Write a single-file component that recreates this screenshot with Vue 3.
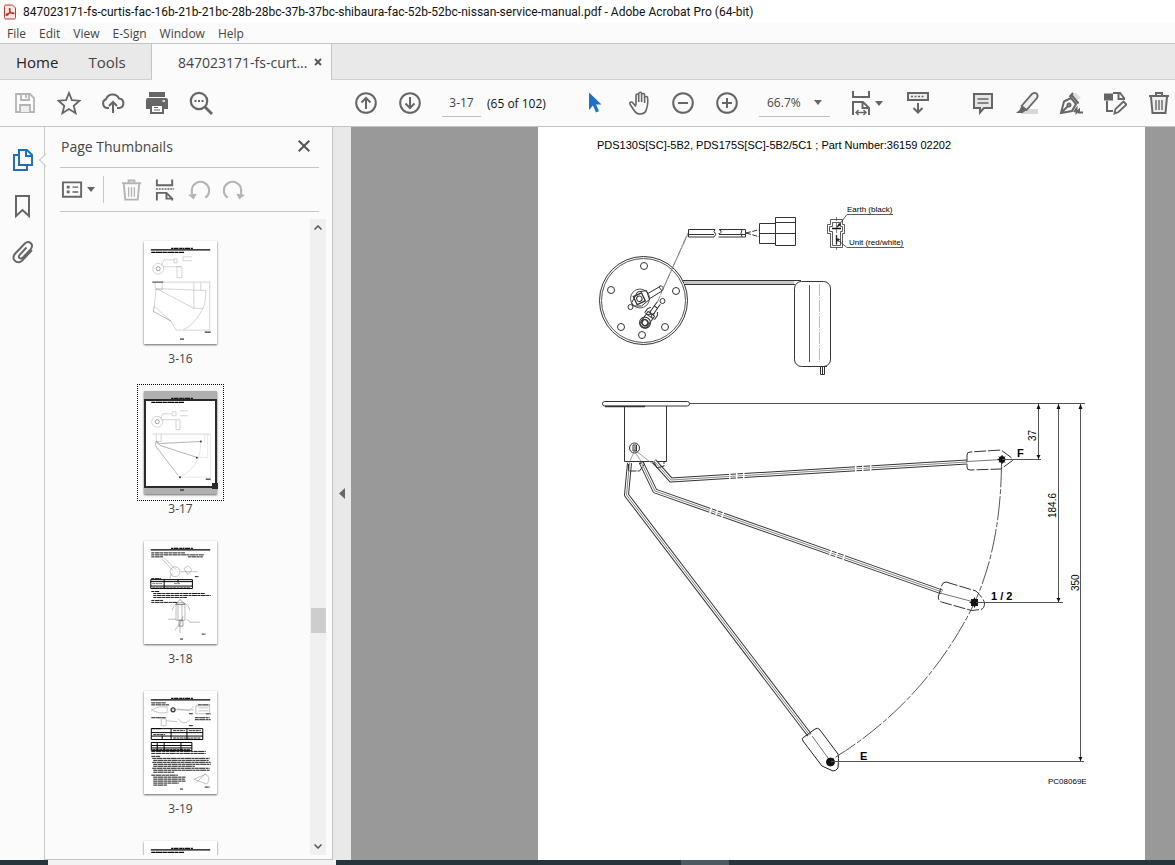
<script setup>
import { ref } from 'vue'

const pageNumber = ref('3-17')
const zoomLevel = ref('66.7%')
const menus = ['File', 'Edit', 'View', 'E-Sign', 'Window', 'Help']
const thumbs = [
  { id: '3-16', caption: '3-16' },
  { id: '3-17', caption: '3-17' },
  { id: '3-18', caption: '3-18' },
  { id: '3-19', caption: '3-19' },
  { id: 'next', caption: '' }
]
const current = ref('3-17')

const bolts = [[644, 266], [611, 290], [676, 291], [621, 327], [665, 327], [642, 335]]
</script>

<template>
  <div class="window">
    <header class="titlebar">
      <svg class="app-icon" viewBox="0 0 12 16" aria-hidden="true">
        <path d="M2 1h6.500l3 3v9.500q0 1.500-1.500 1.500H2Q.5 15 .5 13.500v-11Q.5 1 2 1z" fill="#fbe9e7" stroke="#c9382e" />
        <path d="M2.500 11.500c1.500 0 4-4 3.600-6.300-.2-1-1-.7-.8.300.4 2.200 2.800 4.500 4.200 4.300 1-.2.400-1.100-.8-1.100-2 0-6.200 1-6.600 2-.2.500 0 .8.400.8z" fill="none" stroke="#c81e14" stroke-width="1.100" />
      </svg>
      <h1>847023171-fs-curtis-fac-16b-21b-21bc-28b-28bc-37b-37bc-shibaura-fac-52b-52bc-nissan-service-manual.pdf - Adobe Acrobat Pro (64-bit)</h1>
    </header>

    <nav class="menubar" aria-label="Menu">
      <button v-for="m in menus" :key="m" type="button">{{ m }}</button>
    </nav>

    <div class="tabs">
      <div class="fixed-tabs">
        <button type="button" class="home">Home</button>
        <button type="button">Tools</button>
      </div>
      <div class="doc-tab">
        <button type="button">847023171-fs-curt...</button>
        <button type="button" class="close-tab" aria-label="Close tab">
          <svg viewBox="0 0 8 8" aria-hidden="true"><path d="M1 1l6 6M7 1L1 7" stroke="#555" stroke-width="1.800" /></svg>
        </button>
      </div>
    </div>

    <div class="toolbar">
      <div class="group files">
        <button type="button" class="tool" aria-label="Save">
          <svg viewBox="0 0 24 24" stroke="#b4b4b4" stroke-width="1.800"><path d="M3 3h14l4 4v14H3zM8 3v6h8V3" /><path d="M7 21v-7h10v7" fill="#eee" /><path d="M13 4v3" /></svg>
        </button>
        <button type="button" class="tool" aria-label="Star">
          <svg viewBox="0 0 24 24" stroke="#666" stroke-width="1.800"><path d="M12 2l2.900 7.200 7.700.5-5.900 5 1.900 7.500-6.600-4.100-6.600 4.100 1.900-7.500-5.900-5 7.700-.5z" /></svg>
        </button>
        <button type="button" class="tool" aria-label="Upload">
          <svg viewBox="0 0 24 24" stroke="#666" stroke-width="2"><path d="M8 17H6.500A4.500 4.500 0 0 1 5 8.300a7 7 0 0 1 13-.8 4.800 4.800 0 0 1 .5 9.500H16M12 22V11M8 15l4-4 4 4" /></svg>
        </button>
        <button type="button" class="tool" aria-label="Print">
          <svg viewBox="0 0 24 24"><path d="M4 1h16v5H4zM3 7h18q2 0 2 2v9h-4v-4H5v4H1V9q0-2 2-2z" fill="#666" /><path d="M6 14h12v8H6z" fill="#fff" stroke="#666" stroke-width="2" /><path d="M9 16.500h4M9 19h6" stroke="#666" stroke-width="1.200" /><path d="M17.500 10h2.500" stroke="#fff" stroke-width="1.500" /></svg>
        </button>
        <button type="button" class="tool" aria-label="Search">
          <svg viewBox="0 0 24 24" stroke="#666" stroke-width="2.200"><circle cx="10" cy="10" r="8.200" /><path d="M16 16l7 7" stroke-width="2.800" /><path d="M5.500 10h2M9 10h2M12.500 10h2" stroke-width="1.800" /></svg>
        </button>
      </div>

      <div class="group">
        <button type="button" class="tool" aria-label="Previous page">
          <svg viewBox="0 0 24 24" stroke="#666" stroke-width="2"><circle cx="12" cy="12" r="9.800" /><path d="M12 18V7M7.500 11.500L12 7l4.500 4.500" /></svg>
        </button>
        <button type="button" class="tool" aria-label="Next page">
          <svg viewBox="0 0 24 24" stroke="#666" stroke-width="2"><circle cx="12" cy="12" r="9.800" /><path d="M12 6v11M7.500 12.500L12 17l4.500-4.500" /></svg>
        </button>
        <input v-model="pageNumber" class="page-input" aria-label="Page number">
        <span class="page-count">(65 of 102)</span>
      </div>

      <span class="divider" />

      <div class="group view">
        <button type="button" class="tool" aria-label="Select">
          <svg viewBox="0 0 24 24"><path d="M6 1.500l12.500 12h-5.500l3 6.500-3 1.500-3-7L6 19z" fill="#1e6fc8" /></svg>
        </button>
        <button type="button" class="tool" aria-label="Hand">
          <svg viewBox="0 0 24 24" stroke="#666" stroke-width="1.600"><path d="M8 14V4.500q0-1.500 1.300-1.500t1.400 1.500V11V3q0-1.700 1.500-1.700T13.600 3v8V4q0-1.500 1.500-1.500T16.600 4v8V7q0-1.500 1.500-1.500T19.600 7q.3 2 .1 5t-1.200 6q-1 5-6.500 5-3.500 0-5.500-3L2.200 13.500q-1-1.600.3-2.300t2.500.8l3 3.500" transform="translate(1 0)" /></svg>
        </button>
        <button type="button" class="tool" aria-label="Zoom out">
          <svg viewBox="0 0 24 24" stroke="#666" stroke-width="2"><circle cx="12" cy="12" r="9.800" /><path d="M7 12h10" /></svg>
        </button>
        <button type="button" class="tool" aria-label="Zoom in">
          <svg viewBox="0 0 24 24" stroke="#666" stroke-width="2"><circle cx="12" cy="12" r="9.800" /><path d="M7 12h10M12 7v10" /></svg>
        </button>
        <div class="zoom-box">
          <select v-model="zoomLevel" aria-label="Zoom level">
            <option>66.7%</option>
            <option>100%</option>
          </select>
          <svg class="caret" viewBox="0 0 8 5" aria-hidden="true"><path d="M0 0h8L4 5z" /></svg>
        </div>
        <button type="button" class="tool fit" aria-label="Fit width">
          <svg viewBox="0 0 24 28" stroke="#666" stroke-width="2"><path d="M4 2v6h16V2M4 26V13h10l6 6v7M13.500 13v6H20" /><path d="M7 23.500h10M9.500 21L7 23.500 9.500 26M14.500 21l2.500 2.500-2.500 2.500" stroke-width="1.400" /></svg>
          <svg class="caret" viewBox="0 0 8 5" aria-hidden="true"><path d="M0 0h8L4 5z" /></svg>
        </button>
        <button type="button" class="tool" aria-label="Read mode">
          <svg viewBox="0 0 24 24" stroke="#666" stroke-width="2"><path d="M2 2h20v7H2z" fill="#eee" /><path d="M5 5.500h14" stroke-dasharray="2 1.500" stroke-width="1.600" /><path d="M12 12v9M7.500 17l4.500 4.500 4.500-4.500" /></svg>
        </button>
      </div>

      <span class="divider" />

      <div class="group comment">
        <button type="button" class="tool" aria-label="Comment">
          <svg viewBox="0 0 24 24" stroke="#666" stroke-width="2"><path d="M3 3h18v14h-8l-4 4.500V17H3z" fill="#e6e6e6" /><path d="M6.500 8h11M6.500 12h11" stroke-width="1.400" /></svg>
        </button>
        <button type="button" class="tool" aria-label="Highlight">
          <svg viewBox="0 0 24 24" stroke="#666" stroke-width="1.800"><path d="M6 18h17v5H6z" fill="#d8d8d8" stroke="none" /><path d="M6.500 15L17 3q2.500-2 4.500-.5t.5 4.500L11.500 19z" fill="#eee" /><path d="M6.500 15l5 4-4 3H1l3.500-3z" fill="#666" stroke="none" /></svg>
        </button>
        <button type="button" class="tool" aria-label="Sign">
          <svg viewBox="0 0 24 24" stroke="#666" stroke-width="2"><path d="M13 3l5 6 4-2-5-5z" fill="#ddd" stroke="none" /><path d="M2 22L5 10.500 12 7l5 6-4 7zM2 22l7-7M10.500 6L14 2M12.500 4l7 8.500" /><circle cx="10" cy="14" r="1.500" /><path d="M15 21l2.500-3.500v4l2.500-2.500v2.500h4" /></svg>
        </button>
        <button type="button" class="tool" aria-label="Edit document">
          <svg viewBox="0 0 24 24" stroke="#666" stroke-width="2"><path d="M10 2h7l4 5v2M15.500 2v6H21M4 10v10h6" /><path d="M2 3.500h7v5H2z" fill="#666" /><path d="M11.500 22.500l1-4.500 8-7.500 3 3-8 7.500z" stroke-width="1.800" /></svg>
        </button>
        <button type="button" class="tool" aria-label="Delete">
          <svg viewBox="0 0 24 24" stroke="#666" stroke-width="2"><path d="M4 6l1.500 16h13L20 6" fill="#eee" /><path d="M2 5h20M9 4.500V2h6v2.500" /><path d="M9 9v10M12 9v10M15 9v10" stroke-width="1.400" /></svg>
        </button>
      </div>
    </div>

    <main class="workspace">
      <nav class="rail" aria-label="Navigation panes">
        <button type="button" class="active" aria-label="Page thumbnails">
          <svg viewBox="0 0 24 24" stroke="#1e6fc0" stroke-width="2"><path d="M8 2h8l5 5v10H8zM15 2v6h6" /><path d="M8 7H3v15h13v-5" /></svg>
        </button>
        <button type="button" aria-label="Bookmarks">
          <svg viewBox="0 0 24 24" stroke="#666" stroke-width="2"><path d="M5 2h13v20l-6.500-6L5 22z" /></svg>
        </button>
        <button type="button" aria-label="Attachments">
          <svg viewBox="0 0 24 24" stroke="#666" stroke-width="1.900"><path d="M15.500 7.500l-7 7.500q-1.500 2 0 3t3-.2l8-8.500q3-3.500.3-6t-6 .2l-9.500 10q-3.500 4-.5 7.200t7.200 0l10-10.500" /></svg>
        </button>
      </nav>

      <aside class="panel">
        <div class="panel-head">
          <h2>Page Thumbnails</h2>
          <button type="button" aria-label="Close panel">
            <svg viewBox="0 0 12 12" stroke="#555" stroke-width="2"><path d="M.7.700l10.600 10.600M11.300.700L.700 11.300" /></svg>
          </button>
        </div>
        <div class="panel-tools">
          <button type="button" class="options" aria-label="Options">
            <svg viewBox="0 0 24 24" stroke="#666" stroke-width="2"><path d="M2 4h19v15H2z" /><path d="M6 9h3M6 14h3" stroke-width="3" /><path d="M12 9h6M12 14h6" stroke-width="1.500" /></svg>
            <svg class="caret" viewBox="0 0 8 5" aria-hidden="true"><path d="M0 0h8L4 5z" /></svg>
          </button>
          <span class="tool-divider" />
          <button type="button" aria-label="Delete pages">
            <svg viewBox="0 0 24 24" stroke="#b4b4b4" stroke-width="2"><path d="M4 6l1.500 16h13L20 6" /><path d="M2 5h20M9 4.500V2h6v2.500" /><path d="M9 9v10M12 9v10M15 9v10" stroke-width="1.400" /></svg>
          </button>
          <button type="button" aria-label="Split pages">
            <svg viewBox="0 0 24 24" stroke="#666" stroke-width="2"><path d="M3 1v6h16V1M3 23v-8h10l6 6v2M13 15v6h6" /><path d="M2 11h19" stroke-dasharray="2 1" stroke-width="1.600" /></svg>
          </button>
          <button type="button" aria-label="Rotate left">
            <svg viewBox="0 0 24 24" stroke="#b4b4b4" stroke-width="2.200"><path d="M4 17V12a9 9 0 1 1 14 8" /><path d="M0 17l9-1-3 6z" fill="#b4b4b4" stroke="none" /></svg>
          </button>
          <button type="button" aria-label="Rotate right">
            <svg viewBox="0 0 24 24" stroke="#b4b4b4" stroke-width="2.200"><path d="M20 17V12a9 9 0 1 0-14 8" /><path d="M24 17l-9-1 3 6z" fill="#b4b4b4" stroke="none" /></svg>
          </button>
        </div>

        <div class="list-row">
          <div class="thumb-list">
            <button
              v-for="t in thumbs" :key="t.id" type="button" class="thumb"
              :class="{ selected: t.id === current }" @click="current = t.id"
            >
              <span class="frame">
                <svg viewBox="0 0 73 104" fill="none" stroke="#aaa" stroke-width=".5" aria-hidden="true">
                  <path d="M27 7.500h22" stroke="#111" stroke-width="1.300" stroke-dasharray="2 .5 5 .7 3 .4" />
                  <path v-if="t.id !== '3-17'" d="M6.500 9h60" stroke="#000" stroke-width="1.100" />
                  <path v-if="t.id !== '3-18' && t.id !== '3-19'" d="M7 11.500h33" stroke="#000" stroke-width="1.100" stroke-dasharray="4 .4 7 .4" />

                  <template v-if="t.id === '3-16'">
                    <circle cx="14" cy="28" r="5.500" /><circle cx="14" cy="28" r="2" stroke="#444" />
                    <path d="M17 25l3-6h10M30 18h3v4h-3zM39 16h9M39 20h9M39 16v4M19 26h18M33 26h5v11h-5z" />
                    <path d="M9 41.500h58M11 41v8h7v-8" /><path d="M8 41.500h11" stroke="#444" stroke-width="1" />
                    <path d="M12 48l50 2M62 50v3q0 11-4 17-7 14-19 20h27V42M12 48l38 20h9M50 42v26M57 42v8M12 48l-2 18 17 15 5 9h6" />
                    <path d="M10 66l-1 5 18 10" stroke="#666" />
                    <path d="M61 92h6M36 99h4" stroke="#000" stroke-width="1" />
                  </template>

                  <template v-if="t.id === '3-17'">
                    <circle cx="13" cy="31" r="5.500" /><circle cx="13" cy="31" r="2" stroke="#444" />
                    <path d="M16 28l3-5h8M28 21h4v4h-4zM36 20h8M36 25h8M17 29h15M32 29h4v10h-4z" />
                    <path d="M8 43.500h59M12 44v7h5v-7" />
                    <path d="M12 51l3 2 42-2M12 51l4 4 37 12M12 51l-1 4 23 30" stroke="#666" />
                    <path d="M57 51q0 20-11 29-5 5-11 7h32V44M61 44v7M64 44v23H53" stroke="#ccc" />
                    <path d="M62 89h5M36 100h4" stroke="#000" stroke-width="1" />
                    <g fill="#333" stroke="none"><circle cx="57" cy="51" r="1" /><circle cx="53" cy="67.500" r="1" /><circle cx="36" cy="87" r="1" /></g>
                  </template>

                  <template v-if="t.id === '3-18'">
                    <g stroke="#000" stroke-width=".9" stroke-dasharray="3 .5 5 .4">
                      <path d="M7 12h34M7 14h53M7 16h12M44 16h15M7 38h10M7 51h8M9 53h52M9 55h58M9 57h34M7 60h12M7 62h26M51 36h4M58 94h4M36 99h3" />
                    </g>
                    <path d="M18 18l11 12M20 17l12 12M26 31a5 5 0 1 1 10 0a5 5 0 1 1-10 0zM40 28l4-3 4 4-4 5zM37 31h17M29 33q-3 0-3 5" stroke="#888" />
                    <path d="M6.500 39h42v9h-42zM6.500 41h42M6.500 45.500h42M20 39v9M34 39v3" stroke="#000" stroke-width="1" />
                    <path d="M8 43h10M30 43h6M8 47h38" stroke="#000" stroke-dasharray="3 .5" />
                    <path d="M32 64h9v16h-9zM34 64v16M38 64v16M28 70q2-8 9-8t9 8M36 80v13M31 90l6-8 2-6M24 79h8M43 79l3 3h10" stroke="#777" />
                    <path d="M32 64l4-5 5 5zM35 80h4v6h-4z" stroke="#444" />
                  </template>

                  <template v-if="t.id === '3-19'">
                    <g stroke="#000" stroke-width=".9" stroke-dasharray="4 .4 6 .5 3 .4">
                      <path d="M7 12h15M7 14h18M54 14h12M7 27h15M51 27h15M51 29h16M7 38h10M45 23h4M62 23h5M45 35h4" />
                      <path d="M7 61h55M7 63h55M7 66h9M8 68h58M9 70h56M8 72h59M9 74h58M9 76h42M8 78h58M9 80h57M9 82h21M7 85h27M9 87h33M9 89h32M9 91h33M9 93h26M9 95h14M61 97h5M36 99h3" />
                    </g>
                    <path d="M7 19l5-2 3-1h8v6h-8l-3-1zM26 19h24M33 18l12 2 5-5M52 15h14v8H52zM55 17h10M55 20h10M17 28h5v7h-5zM22 30l11 1M34 28q6 8 12 1M50 89l12-5q6 4 1 10zM52 93l10-10" stroke="#888" />
                    <circle cx="29" cy="19" r="2" stroke="#333" stroke-width="1.200" />
                    <path d="M7 38h52v11H7zM7 42h52M7 45.500h52M27 38v11M43 38v11M18 45v4M7 52h41v8H7zM7 55h41M7 57.500h41M13 52v8M20 52v8M37 52v8" stroke="#000" stroke-width="1" />
                    <path d="M29 40h12M45 40h12M9 44h12M29 47.500h28M8 59h38" stroke="#000" stroke-width=".8" stroke-dasharray="3 .5" />
                  </template>
                </svg>
                <span v-if="t.id === current" class="viewport" />
              </span>
              <span v-if="t.caption" class="caption">{{ t.caption }}</span>
            </button>
          </div>
          <div class="scrollbar">
            <svg viewBox="0 0 8 5" aria-hidden="true"><path d="M.5 4.500L4 1l3.500 3.500" /></svg>
            <span class="scroll-thumb" />
            <svg viewBox="0 0 8 5" aria-hidden="true"><path d="M.5.500L4 4 7.500.500" /></svg>
          </div>
        </div>
      </aside>

      <button type="button" class="splitter" aria-label="Collapse panel">
        <svg viewBox="0 0 6 11" aria-hidden="true"><path d="M6 0v11L0 5.500z" fill="#666" /></svg>
      </button>

      <section class="canvas" aria-label="Document">
        <article class="page">
          <p>PDS130S[SC]-5B2, PDS175S[SC]-5B2/5C1 ; Part Number:36159 02202</p>
          <svg class="drawing" viewBox="538 165 607 675" fill="none" stroke="#333" stroke-width="1">
            <!-- flange, top view -->
            <circle cx="643.500" cy="300.500" r="44" /><circle cx="643.500" cy="300.500" r="42" stroke="#555" />
            <circle v-for="b in bolts" :key="b[0]" :cx="b[0]" :cy="b[1]" r="3.500" />
            <circle cx="640" cy="298.500" r="9.500" stroke="#555" />
            <path d="M631.500 303l6-11 9-1.500 3 9-8 6.500h-8z" />
            <g transform="rotate(-25 640 299)"><path d="M635 294h9v9h-9z" stroke-width="1.300" /><circle cx="639.500" cy="298.500" r="2.700" /></g>
            <path d="M647 294l12-7 3 4-13 8M659 286.500q3-2 4 1t-2 3.500" />
            <circle cx="662.500" cy="301" r="2.500" /><circle cx="630.500" cy="307" r="2.500" />
            <g transform="rotate(35 649 317)">
              <path d="M645 313h8v14q-4 4-8 0zM647 305h4v8h-4zM645 308l-2 3v5M653 308l2 3v5M644 316h10" />
              <circle cx="649" cy="324" r="5.500" /><circle cx="649" cy="324" r="3" stroke-width="1.500" /><path d="M647 300v5M651 300v5M646 316l6-5M646 311l6 5" />
            </g>
            <path d="M657 303l29-66 3-6M661 293l28-61" stroke="#777" stroke-width=".8" stroke-dasharray="8 1 3 1" />

            <!-- lead and connector -->
            <path d="M715 229.500h-26.500v7.500h25.500M689 234.500h25M715 229.500q-2 2 0 3.500t-1 4M719 229.500h26.500v7.500h-27M719 234.500h26M742 230q-2 3 0 7M745.500 230v7M719 229.500q3 1 2 3t-2.500 1" />
            <path d="M746 233l14-3.500M746 233l14 4" stroke-dasharray="5 1.500" />
            <path d="M759.500 223.500h16v20h-16zM759.500 233.500h36M775.500 217.500h20v28h-20zM775.500 222.500h20" />
            <path d="M830.500 219.500h12v5h2v9h-2v14h-12v-14h-3v-9h3zM832.500 222.500h8v4h2v5h-2v14h-8v-14h-3v-5h3z" stroke-width=".8" />
            <path d="M832 228.500h9M836.500 235v9" stroke="#111" stroke-width="1.300" />
            <path d="M836.500 217v33" stroke-dasharray="4 2" stroke-width=".6" />
            <path d="M893 214.500h-46l-10 13M904 247.500h-57l-10-8" stroke-width=".8" />
            <path d="M836 228l5-3-2-2zM836 238l2 4 2-3z" fill="#222" stroke="none" />
            <g class="label" font-size="8"><text x="847" y="212">Earth (black)</text><text x="849" y="245">Unit (red/white)</text></g>

            <!-- arm and float, top view -->
            <path d="M684 282.500h110" stroke="#c8c8c8" stroke-width="3" /><path d="M683 280.500h118M684 284.500h111" />
            <rect x="794.500" y="281.500" width="36" height="85" rx="7" />
            <path d="M809.500 285v77" stroke="#555" /><path d="M819.500 284v78" stroke="#bbb" stroke-dasharray="12 1 2 1" />
            <path d="M818 366.500h9M820.500 367v7.500h4V367M822.500 367v7" />

            <!-- mounting flange, side view -->
            <rect x="602.500" y="401.500" width="87" height="4.500" rx="2.200" /><path d="M605 406.500h40" stroke-width="1.500" />
            <path d="M624.500 406v55.500h42V406" />
            <circle cx="634.500" cy="448" r="5" /><path d="M633 445h3.500v6H633zM635 446v5" />
            <path d="M634 452l-5 11M635 452l9 14M636 451l22 17" stroke="#777" stroke-width=".7" />

            <!-- float arms -->
            <g class="arms" stroke-linejoin="round">
              <path class="outer" d="M629.500 463L626.500 495l183 240M641 462l14 29 287 101M654 461l17 19 296-18" />
              <path class="inner" d="M629.500 463L626.500 495l183 240M641 462l14 29 287 101M654 461l17 19 296-18" />
              <path class="core" d="M629.500 463L626.500 495l183 240M641 462l14 29 287 101M654 461l17 19 296-18" />
            </g>
            <g stroke="#fff" stroke-width="6"><path d="M710 510l1.500.5M716 512l1.500.5M722 514.500l1.500.5M830 552l1.500.5M836 554.500l1.500.5M843 557l1.500.5M729 476l1.500 0M736 476l1.500 0M743 475.500l1.500 0M855 469l1.500 0M862 468.500l1.500 0M870 468l1.500 0" /></g>
            <path d="M628.500 464v7h11l5-7M654 462l3 6 7-2v-4M640 464l2-3 3 4" stroke-dasharray="7 1" />

            <!-- level arc and floats -->
            <path d="M1001.500 463Q1001 545 974 604 925 703 831 760" stroke="#555" stroke-dasharray="24 2 5 2" />
            <path d="M970 452q-3 0-3 3v12q0 3 3 3l31-1 11.500-8.500v-2L1001 450z" stroke-dasharray="12 2" />
            <path d="M967 461.500l35-2M812 736l19 26M940 593l34 9" stroke="#777" />
            <path d="M946 582l30 9q8 8 8.500 12 0 6-4 6.500l-9 1-30-8.500q-4-2-3-6l3-10q1-4 4.500-4z" stroke-dasharray="12 2" />
            <path d="M804 737l11-8q3-2 5 1l18 24q1 2 0 14-2 3-5 3l-11-5-19-25q-2-3 1-4z" stroke="#222" />
            <g fill="#111" stroke="#111"><circle cx="1002" cy="459.500" r="3" /><circle cx="974.500" cy="602.500" r="3.500" /><circle cx="830.500" cy="762" r="4" /></g>
            <path d="M997.500 459.500h9M1002 455v9M999 456.500l6 6M1005 456.500l-6 6M969.500 602.500h10M974.500 597.500v10M971 599l7 7M978 599l-7 7" stroke="#111" />

            <!-- dimensions -->
            <path d="M689 403.500h396M1002 459.500h39M976 602.500h87M831 761.500h253M1038.500 404v55M1058.500 404v198M1080.500 404v357" stroke="#555" />
            <path d="M1036.500 409l2-5 2 5zM1056.500 409l2-5 2 5zM1078.500 409l2-5 2 5zM1036.500 455l2 4 2-4zM1056.500 598l2 4 2-4zM1078.500 757l2 4 2-4z" fill="#111" stroke="none" />
            <g class="label" font-size="10">
              <text transform="translate(1036 441) rotate(-90)">37</text>
              <text transform="translate(1056 518) rotate(-90)">184.6</text>
              <text transform="translate(1079 591) rotate(-90)">350</text>
            </g>
            <g class="label bold" font-size="11"><text x="1017" y="457">F</text><text x="991" y="600">1 / 2</text><text x="860" y="760">E</text></g>
            <text class="label" x="1048" y="784" font-size="8">PC08069E</text>
          </svg>
        </article>
      </section>
    </main>

    <footer class="strip"><span class="strip-light" /><span class="strip-mark" /></footer>
  </div>
</template>

<style>
body {
  background: #fafafa;
}
</style>

<style scoped>
.window {
  display: flex;
  flex-direction: column;
  height: 100vh;
  overflow: hidden;
  background: #fbfbfb;
  color: #444;
  font-family: "Segoe UI", "Open Sans", "Noto Sans", sans-serif;
}
button, input, select {
  font: inherit;
  color: inherit;
  background: none;
  border: 0;
  border-radius: 0;
  padding: 0;
  margin: 0;
}
button {
  display: flex;
  align-items: center;
  justify-content: center;
}
h1, h2, p {
  margin: 0;
  font-weight: 400;
  white-space: nowrap;
}
svg {
  display: block;
  flex: none;
  fill: none;
}
.caret {
  width: 8px;
  height: 5px;
  fill: #666;
}

.titlebar {
  flex: none;
  display: flex;
  align-items: center;
  gap: 7px;
  height: 23px;
  padding-left: 4px;
  background: #fff;
  color: #111;
}
.app-icon {
  width: 12px;
  height: 16px;
}
h1 {
  font-family: "Segoe UI", Roboto, "Open Sans", sans-serif;
  font-size: 12px;
}
.menubar {
  flex: none;
  display: flex;
  gap: 13px;
  height: 20px;
  padding-bottom: 0;
  padding-left: 7px;
  font-size: 12px;
}
.tabs {
  flex: none;
  display: flex;
  height: 37px;
  box-sizing: border-box;
  background: #e9e9e9;
  border-top: 1px solid #c4c4c4;
  border-bottom: 1px solid #d0d0d0;
  font-size: 15px;
}
.fixed-tabs {
  display: flex;
  gap: 30px;
  width: 135px;
  padding-left: 16px;
  border-right: 1px solid #c4c4c4;
}
.home {
  color: #222;
}
.doc-tab {
  display: flex;
  align-items: center;
  gap: 7px;
  width: 153px;
  height: 36px;
  padding-left: 26px;
  font-size: 14px;
  background: #fbfbfb;
  border-right: 1px solid #c4c4c4;
}
.close-tab svg {
  width: 8px;
  height: 8px;
}

.toolbar {
  flex: none;
  display: flex;
  align-items: center;
  height: 47px;
  padding-left: 3px;
  box-sizing: border-box;
  border-bottom: 1px solid #c4c4c4;
  font-size: 12px;
}
.group {
  display: flex;
  align-items: center;
}
.files {
  margin-right: 121px;
}
.tool {
  width: 44px;
  height: 44px;
}
.tool svg:first-child {
  width: 24px;
  height: 24px;
}
.page-input {
  width: 39px;
  height: 27px;
  margin-left: 10px;
  text-align: center;
  border-bottom: 1px solid #c0c0c0;
}
.page-count {
  width: 75px;
  padding-left: 6px;
  color: #111;
  white-space: nowrap;
}
.divider {
  width: 1px;
  height: 27px;
  background: #c8c8c8;
}
.view {
  margin-left: 11px;
  margin-right: 10px;
}
.zoom-box {
  display: flex;
  align-items: center;
  width: 71px;
  height: 27px;
  margin-left: 10px;
  margin-right: 12px;
  border-bottom: 1px solid #c0c0c0;
}
.zoom-box select {
  width: 55px;
  padding-left: 8px;
  appearance: none;
}
.tool.fit {
  gap: 2px;
  width: 54px;
  padding-left: 7px;
  justify-content: flex-start;
}
.tool.fit svg:first-child {
  height: 28px;
}
.comment {
  margin-left: 11px;
}

.workspace {
  flex: 1;
  display: flex;
  min-height: 0;
}
.rail {
  flex: none;
  width: 44px;
  padding-top: 10px;
  border-right: 1px solid #c8c8c8;
}
.rail button {
  position: relative;
  width: 45px;
  height: 46px;
}
.rail svg {
  width: 24px;
  height: 24px;
}
.rail .active::after {
  content: "";
  position: absolute;
  top: 18px;
  right: -6px;
  width: 9px;
  height: 9px;
  background: #fbfbfb;
  border-left: 1px solid #c8c8c8;
  border-bottom: 1px solid #c8c8c8;
  transform: rotate(45deg);
}
.panel {
  flex: none;
  display: flex;
  flex-direction: column;
  width: 287px;
  box-sizing: border-box;
  border-bottom: 1px solid #c4c4c4;
}
.panel-head, .panel-tools {
  flex: none;
  display: flex;
  align-items: center;
  box-sizing: border-box;
  margin: 0 13px 0 15px;
  border-bottom: 1px solid #c4c4c4;
}
.panel-head {
  justify-content: space-between;
  height: 41px;
  padding: 0 9px 2px 1px;
}
h2 {
  font-size: 14px;
}
.panel-head svg {
  width: 12px;
  height: 12px;
}
.panel-tools {
  height: 44px;
}
.panel-tools button {
  width: 34px;
}
.panel-tools .options {
  width: 36px;
  gap: 3px;
}
.panel-tools svg:first-child {
  width: 23px;
  height: 24px;
}
.tool-divider {
  width: 1px;
  height: 27px;
  margin: 0 10px 0 7px;
  background: #c8c8c8;
}
.list-row {
  flex: 1;
  display: flex;
  min-height: 0;
  margin: 7px 6px 4px;
}
.thumb-list {
  flex: 1;
  overflow: hidden;
  padding-top: 15px;
}
.thumb {
  flex-direction: column;
  width: 100%;
  height: 150px;
  justify-content: flex-start;
}
.frame {
  position: relative;
  padding: 6px;
  border: 1px dotted transparent;
}
.frame svg {
  width: 73px;
  height: 103px;
  background: #fff;
  box-shadow: 0 1px 2px rgba(0, 0, 0, 0.6);
}
.selected .frame {
  border-color: #000;
}
.selected .frame svg {
  background: linear-gradient(#b0b0b0 8px, #fff 8px, #fff 97px, #b0b0b0 97px);
}
.viewport {
  position: absolute;
  inset: 14px 6px 12px;
  border: 2px solid #2a2a2a;
}
.viewport::after {
  content: "";
  position: absolute;
  right: -3px;
  bottom: -3px;
  width: 6px;
  height: 6px;
  background: #2a2a2a;
}
.caption {
  font-size: 12px;
  line-height: 16px;
}
.scrollbar {
  display: flex;
  flex-direction: column;
  align-items: center;
  justify-content: space-between;
  width: 16px;
  padding: 6px 0;
  box-sizing: border-box;
  background: #f0f0f0;
}
.scrollbar svg {
  width: 8px;
  height: 5px;
  stroke: #555;
  stroke-width: 1.5;
}
.scroll-thumb {
  width: 15px;
  height: 25px;
  margin-top: 167px;
  background: #cdcdcd;
}
.splitter {
  flex: none;
  width: 19px;
  border-left: 1px solid #c4c4c4;
  background: #e9e9e9;
}
.splitter svg {
  width: 6px;
  height: 11px;
}
.canvas {
  flex: 1;
  min-width: 0;
  display: flex;
  padding: 0 30px 0 187px;
  background: #999;
  overflow: hidden;
}
.page {
  flex: 1;
  min-width: 0;
  background: #fff;
  color: #000;
  font-family: "Liberation Sans", Arial, sans-serif;
}
.page p {
  height: 38px;
  padding-left: 59px;
  font-size: 11px;
  line-height: 36px;
}
.drawing {
  width: 100%;
}
.label {
  fill: #000;
  stroke: none;
  font-family: "Liberation Sans", Arial, sans-serif;
}
.bold {
  font-weight: 700;
}
.outer {
  stroke: #333;
  stroke-width: 5;
}
.inner {
  stroke: #fff;
  stroke-width: 3;
}
.core {
  stroke: #888;
  stroke-width: 1;
}
.strip {
  flex: none;
  display: flex;
  height: 5px;
  padding-left: 48px;
  background: #26343c;
}
.strip-light {
  width: 288px;
  background: #f2f2f2;
}
.strip-mark {
  width: 48px;
  margin-left: 345px;
  background: #4c5a62;
}
</style>
